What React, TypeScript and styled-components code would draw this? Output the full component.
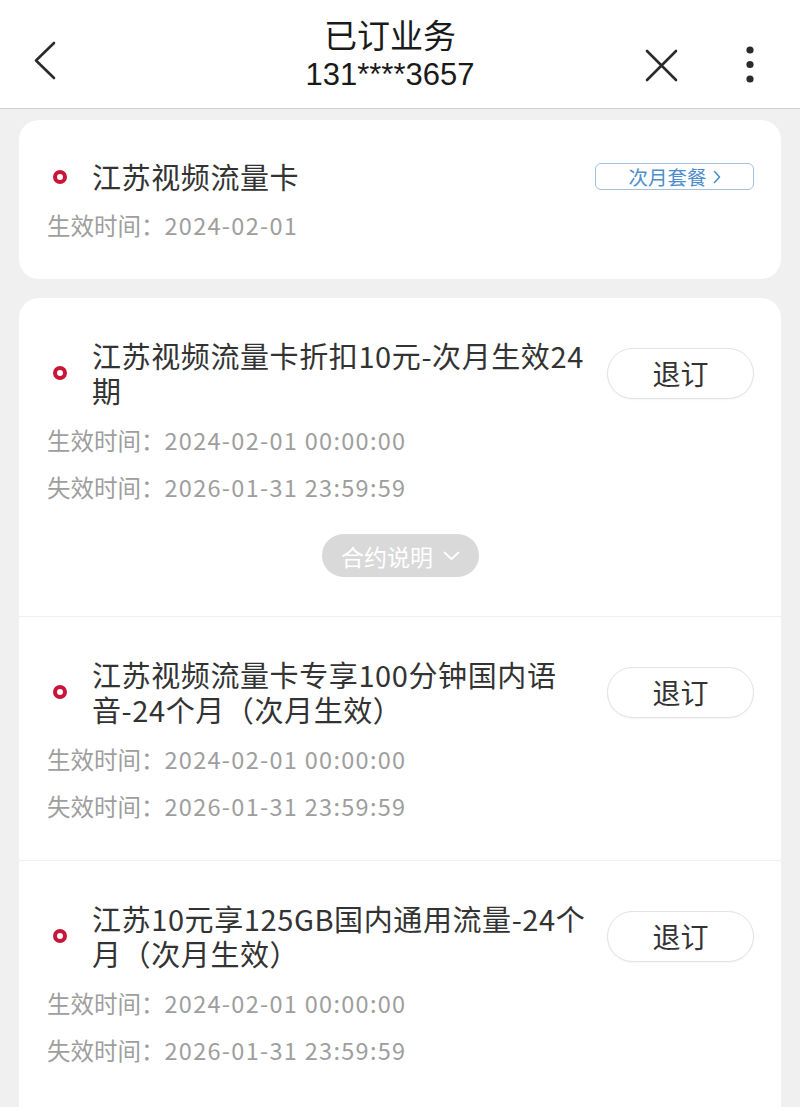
import * as React from "react"
import styled, { createGlobalStyle } from "styled-components"

const GlobalStyle = createGlobalStyle`
  html, body {
    margin: 0;
    padding: 0;
    background: #f0f0f0;
  }
  body {
    font-family: "Noto Sans CJK SC", "Noto Sans", sans-serif;
    color: #333;
  }
`

const Header = styled.header`
  display: flex;
  align-items: flex-start;
  height: 108px;
  background: #fff;
  border-bottom: 1px solid #cfcfcf;
`

const LeftSlot = styled.div`
  width: 136px;
  padding: 40px 0 0 28px;
  box-sizing: border-box;
  display: flex;
  align-items: center;
`

const RightSlot = styled.div`
  width: 156px;
  padding: 45px 43px 0 0;
  box-sizing: border-box;
  display: flex;
  align-items: flex-start;
  justify-content: space-between;
`

const TitleBlock = styled.div`
  flex: 1;
  display: flex;
  flex-direction: column;
  align-items: center;
  padding-top: 15px;
`

const Title = styled.div`
  font-size: 33px;
  line-height: 38px;
  color: #1a1a1a;
`

const Phone = styled.div`
  font-family: "Liberation Sans", Arial, sans-serif;
  font-size: 31px;
  line-height: 44px;
  color: #1a1a1a;
`

const IconButton = styled.div`
  display: flex;
  align-items: center;
  justify-content: center;
`

const Main = styled.main`
  display: flex;
  flex-direction: column;
  gap: 19px;
  padding: 11px 19px 0;
`

const Card = styled.section`
  background: #fff;
  border-radius: 20px;
  overflow: hidden;
`

const SimpleCard = styled(Card)`
  height: 159px;
  box-sizing: border-box;
  padding: 39px 27px 0 28px;
`

const Item = styled.div<{ $last?: boolean; $bottom?: number }>`
  padding: 40px 27px ${(p) => p.$bottom ?? 30}px 28px;
  border-bottom: ${(p) => (p.$last ? "none" : "1px solid #f0f0f0")};
`

const Row = styled.div`
  display: flex;
  align-items: center;
`

const DotWrap = styled.div`
  width: 45px;
  flex-shrink: 0;
  display: flex;
`

const Dot = styled.span`
  width: 14px;
  height: 14px;
  box-sizing: border-box;
  margin-left: 6px;
  border-radius: 50%;
  border: 4.2px solid #c8153a;
`

const ItemTitle = styled.div`
  flex: 1;
  font-size: 29px;
  line-height: 35px;
  color: #333;
  letter-spacing: 0.6px;
`

const UnsubscribeButton = styled.button`
  flex-shrink: 0;
  margin-left: 16px;
  width: 147px;
  height: 51px;
  border-radius: 26px;
  border: 1px solid #e2e2e2;
  background: #fff;
  font-family: inherit;
  font-size: 28px;
  color: #333;
  box-shadow: 0 1px 2px rgba(0, 0, 0, 0.04);
  padding: 0;
`

const Badge = styled.div`
  display: flex;
  align-items: center;
  justify-content: center;
  gap: 6px;
  width: 159px;
  height: 27px;
  box-sizing: border-box;
  border: 1.5px solid #a4c0dc;
  border-radius: 6px;
  color: #4d8dcc;
  font-size: 19.5px;
`

const Dates = styled.div<{ $top: number }>`
  margin-top: ${(p) => p.$top}px;
`

const DateLine = styled.div`
  font-size: 23.5px;
  line-height: 47px;
  color: #9e9e9e;
`

const DateValue = styled.span`
  letter-spacing: 1.3px;
`

const PillRow = styled.div`
  display: flex;
  justify-content: center;
  margin-top: 23px;
`

const Pill = styled.div`
  display: flex;
  align-items: center;
  justify-content: center;
  gap: 10px;
  width: 157px;
  height: 43px;
  border-radius: 22px;
  background: #d9d9d9;
  color: #fff;
  font-size: 23px;
`

const BackIcon = () => (
  <svg width="30" height="40" viewBox="0 0 30 40">
    <path d="M26 3 L8 20.5 L26 38" fill="none" stroke="#2a2a2a" strokeWidth="2.6" strokeLinecap="round" strokeLinejoin="round" />
  </svg>
)

const CloseIcon = () => (
  <svg width="34" height="38" viewBox="0 0 34 38">
    <path d="M3 6 L32 35 M32 6 L3 35" fill="none" stroke="#2a2a2a" strokeWidth="2.6" strokeLinecap="round" />
  </svg>
)

const MoreIcon = () => (
  <svg width="14" height="40" viewBox="0 0 14 40">
    <circle cx="7" cy="5" r="3.6" fill="#2a2a2a" />
    <circle cx="7" cy="19.5" r="3.6" fill="#2a2a2a" />
    <circle cx="7" cy="34" r="3.6" fill="#2a2a2a" />
  </svg>
)

const ChevronRight = () => (
  <svg width="8" height="14" viewBox="0 0 8 14">
    <path d="M1.5 1.5 L6.5 7 L1.5 12.5" fill="none" stroke="#4d8dcc" strokeWidth="1.6" strokeLinecap="round" strokeLinejoin="round" />
  </svg>
)

const ChevronDown = () => (
  <svg width="17" height="10" viewBox="0 0 17 10">
    <path d="M1.5 1.5 L8.5 8 L15.5 1.5" fill="none" stroke="#fff" strokeWidth="1.8" strokeLinecap="round" strokeLinejoin="round" />
  </svg>
)

type Plan = {
  name: string
  start: string
  end: string
  contract?: boolean
}

const plans: Plan[] = [
  {
    name: "江苏视频流量卡折扣10元-次月生效24期",
    start: "2024-02-01 00:00:00",
    end: "2026-01-31 23:59:59",
    contract: true,
  },
  {
    name: "江苏视频流量卡专享100分钟国内语音-24个月（次月生效）",
    start: "2024-02-01 00:00:00",
    end: "2026-01-31 23:59:59",
  },
  {
    name: "江苏10元享125GB国内通用流量-24个月（次月生效）",
    start: "2024-02-01 00:00:00",
    end: "2026-01-31 23:59:59",
  },
]

const PlanItem = ({ plan, last }: { plan: Plan; last: boolean }) => (
  <Item $last={last} $bottom={plan.contract ? 39 : last ? 60 : 30}>
    <Row>
      <DotWrap>
        <Dot />
      </DotWrap>
      <ItemTitle>{plan.name}</ItemTitle>
      <UnsubscribeButton>退订</UnsubscribeButton>
    </Row>
    <Dates $top={9}>
      <DateLine>
        生效时间：<DateValue>{plan.start}</DateValue>
      </DateLine>
      <DateLine>
        失效时间：<DateValue>{plan.end}</DateValue>
      </DateLine>
    </Dates>
    {plan.contract && (
      <PillRow>
        <Pill>
          合约说明
          <ChevronDown />
        </Pill>
      </PillRow>
    )}
  </Item>
)

const App = () => (
  <>
    <GlobalStyle />
    <Header>
      <LeftSlot>
        <IconButton>
          <BackIcon />
        </IconButton>
      </LeftSlot>
      <TitleBlock>
        <Title>已订业务</Title>
        <Phone>131****3657</Phone>
      </TitleBlock>
      <RightSlot>
        <IconButton>
          <CloseIcon />
        </IconButton>
        <IconButton>
          <MoreIcon />
        </IconButton>
      </RightSlot>
    </Header>
    <Main>
      <SimpleCard>
        <Row>
          <DotWrap>
            <Dot />
          </DotWrap>
          <ItemTitle>江苏视频流量卡</ItemTitle>
          <Badge>
            次月套餐
            <ChevronRight />
          </Badge>
        </Row>
        <Dates $top={8}>
          <DateLine>
            生效时间：<DateValue>2024-02-01</DateValue>
          </DateLine>
        </Dates>
      </SimpleCard>
      <Card>
        {plans.map((p, i) => (
          <PlanItem key={p.name} plan={p} last={i === plans.length - 1} />
        ))}
      </Card>
    </Main>
  </>
)

export default App
